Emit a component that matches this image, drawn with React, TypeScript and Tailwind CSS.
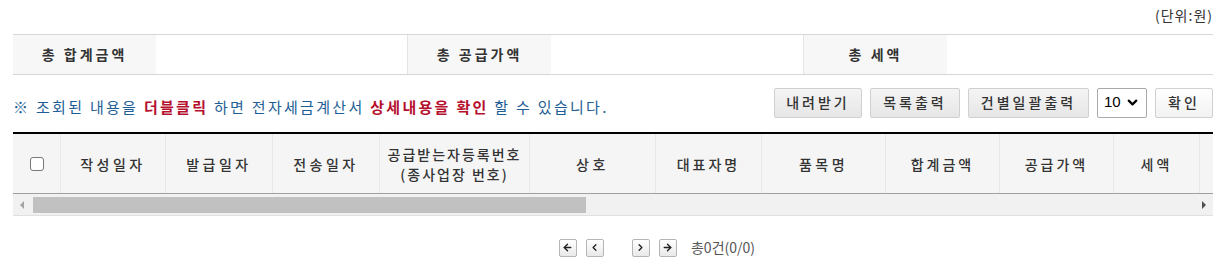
import { ArrowLeft, ArrowRight, ChevronDown, ChevronLeft, ChevronRight } from "lucide-react";

const font = { fontFamily: '"Noto Sans CJK KR", "Noto Sans", sans-serif' };

const cols = [
  { label: "작성일자", w: "w-[105px]", t: "tracking-[3.5px]" },
  { label: "발급일자", w: "w-[107px]", t: "tracking-[3.5px]" },
  { label: "전송일자", w: "w-[107px]", t: "tracking-[3.5px]" },
  { label: "공급받는자등록번호\n(종사업장 번호)", w: "w-[150px]", t: "tracking-[2px]" },
  { label: "상호", w: "w-[126px]", t: "tracking-[3.5px]" },
  { label: "대표자명", w: "w-[106px]", t: "tracking-[3px]" },
  { label: "품목명", w: "w-[124px]", t: "tracking-[3.5px]" },
  { label: "합계금액", w: "w-[114px]", t: "tracking-[3px]" },
  { label: "공급가액", w: "w-[114px]", t: "tracking-[3px]" },
  { label: "세액", w: "w-[86px]", t: "tracking-[3px]" },
];

const SumLabel = ({ children }: { children: string }) => (
  <div className="w-[143px] shrink-0 bg-[#f7f7f7] flex items-center justify-center font-bold text-[#333] tracking-[3px]">
    {children}
  </div>
);

const btn =
  "h-[30px] px-[6px] border border-[#d0d0d0] rounded-[2px] bg-gradient-to-b from-[#f4f4f4] to-[#e6e6e6] text-[#333] text-[14px] font-medium tracking-[3px]";

const PageBtn = ({ children }: { children: React.ReactNode }) => (
  <div className="w-[18px] h-[18px] border border-[#b5b5b5] rounded-[2px] bg-gradient-to-b from-white to-[#e9e9e9] flex items-center justify-center text-[#222]">
    {children}
  </div>
);

export default function App() {
  return (
    <div className="w-[1229px] h-[274px] bg-white text-[14px] text-[#333]" style={font}>
      <div className="w-[1200px] ml-[13px]">
        <div className="h-[34px] flex justify-end items-start pt-[5px] text-[14px] tracking-[1px] text-[#333]">
          (단위:원)
        </div>
        <div className="h-[41px] flex border-t border-b border-[#d6d6d6]">
          <SumLabel>총 합계금액</SumLabel>
          <div className="w-[252px] border-r border-[#e4e4e4]" />
          <SumLabel>총 공급가액</SumLabel>
          <div className="w-[253px] border-r border-[#e4e4e4]" />
          <SumLabel>총 세액</SumLabel>
          <div className="flex-1" />
        </div>
        <div className="h-[57px] flex items-center justify-between">
          <p className="text-[#1e5e96] text-[15px] tracking-[2.3px] mt-[8px] whitespace-nowrap">
            ※ 조회된 내용을 <b className="text-[#b5102e]">더블클릭</b> 하면 전자세금계산서{" "}
            <b className="text-[#b5102e]">상세내용을 확인</b> 할 수 있습니다.
          </p>
          <div className="flex items-center gap-[8px] mt-[-2px]">
            <button className={btn + " w-[88px]"}>내려받기</button>
            <button className={btn + " w-[90px]"}>목록출력</button>
            <button className={btn + " w-[121px]"}>건별일괄출력</button>
            <div className="w-[50px] h-[30px] border border-[#aaa] rounded-[2px] flex items-center justify-between px-[6px] text-[15px] text-black" style={{ fontFamily: '"Liberation Sans", sans-serif' }}>
              10 <ChevronDown size={15} strokeWidth={3.5} />
            </div>
            <button className={btn + " w-[58px] from-white to-[#f2f2f2]"}>확인</button>
          </div>
        </div>
        <div className="border-t-2 border-black">
          <div className="h-[60px] flex bg-[#f5f5f5] border-b border-[#a0a0a0]">
            <div className="w-[48px] flex items-center justify-center border-r border-[#e8e8e8]">
              <div className="w-[14px] h-[14px] border border-[#777] rounded-[3px] bg-white" />
            </div>
            {cols.map((c) => (
              <div
                key={c.label}
                className={
                  c.w +
                  " " +
                  c.t +
                  " shrink-0 flex items-center justify-center text-center whitespace-pre-line leading-[20px] font-medium text-[#333] border-r border-[#e8e8e8]"
                }
              >
                {c.label}
              </div>
            ))}
            <div className="flex-1" />
          </div>
          <div className="h-[22px] flex items-center bg-[#f1f1f1] border-b border-[#e0e0e0]">
            <div className="w-[18px] flex justify-center">
              <div className="w-0 h-0 border-y-[4px] border-y-transparent border-r-[4px] border-r-[#a3a3a3]" />
            </div>
            <div className="w-[553px] h-[16px] bg-[#c1c1c1] ml-[2px]" />
            <div className="flex-1" />
            <div className="w-[18px] flex justify-center">
              <div className="w-0 h-0 border-y-[4px] border-y-transparent border-l-[4px] border-l-[#505050]" />
            </div>
          </div>
        </div>
        <div className="flex items-center justify-center mt-[21px] ml-[88px]">
          <PageBtn><ArrowLeft size={11} strokeWidth={3} /></PageBtn>
          <div className="w-[9px]" />
          <PageBtn><ChevronLeft size={11} strokeWidth={3} /></PageBtn>
          <div className="w-[28px]" />
          <PageBtn><ChevronRight size={11} strokeWidth={3} /></PageBtn>
          <div className="w-[9px]" />
          <PageBtn><ArrowRight size={11} strokeWidth={3} /></PageBtn>
          <span className="ml-[14px] text-[14px] text-[#555]">총0건(0/0)</span>
        </div>
      </div>
    </div>
  );
}
